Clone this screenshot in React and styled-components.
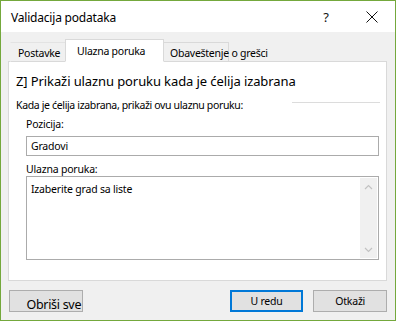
import React from 'react';
import styled, { createGlobalStyle } from 'styled-components';

const Global = createGlobalStyle`
  html, body { margin: 0; padding: 0; background: #ffffff; }
  * { box-sizing: border-box; }
  body { font-family: "Noto Sans", "Open Sans", sans-serif; color: #000; }
`;

const Window = styled.div`
  width: 396px;
  height: 321px;
  border: 1px solid #74a83c;
  display: flex;
  flex-direction: column;
  background: #f0f0f0;
  overflow: hidden;
`;

const TitleBar = styled.div`
  height: 31px;
  background: #ffffff;
  display: flex;
  align-items: center;
  padding-left: 10px;
  flex-shrink: 0;
`;

const Title = styled.div`
  flex: 1;
  font-size: 12px;
  letter-spacing: -0.2px;
  padding-top: 1px;
`;

const TitleButton = styled.div`
  width: 46px;
  height: 31px;
  display: flex;
  align-items: center;
  justify-content: center;
  font-size: 13px;
  color: #111;
`;

const Body = styled.div`
  flex: 1;
  display: flex;
  flex-direction: column;
  padding: 7px 8px 9px 7px;
`;

const TabRow = styled.div`
  display: flex;
  align-items: flex-end;
  height: 23px;
  padding-left: 2px;
  margin-bottom: -1px;
  position: relative;
  z-index: 1;
`;

const Tab = styled.div`
  height: ${p => (p.$active ? '23px' : '20px')};
  width: ${p => p.$w}px;
  border: 1px solid #d9d9d9;
  border-bottom: ${p => (p.$active ? '1px solid #ffffff' : '1px solid #d9d9d9')};
  ${p => (p.$plain ? 'border-color: transparent; border-top-color: #e3e3e3; border-bottom-color: #d9d9d9;' : '')}
  background: ${p => (p.$active ? '#ffffff' : '#f0f0f0')};
  font-size: 10.5px;
  letter-spacing: -0.25px;
  padding-left: ${p => p.$pad}px;
  display: flex;
  align-items: center;
  padding-top: ${p => (p.$active ? '0' : '1px')};
  white-space: nowrap;
  overflow: visible;
  margin-left: ${p => (p.$active ? '-1px' : '0')};
  margin-right: ${p => (p.$active ? '-1px' : '0')};
  position: relative;
  z-index: ${p => (p.$active ? 2 : 1)};
`;

const Panel = styled.div`
  width: 379px;
  height: 220px;
  background: #ffffff;
  border: 1px solid #d9d9d9;
  padding: 9px 6px 0 7px;
  display: flex;
  flex-direction: column;
`;

const CheckLine = styled.div`
  font-size: 13px;
  height: 20px;
  line-height: 20px;
  letter-spacing: -0.1px;
`;

const GroupHead = styled.div`
  display: flex;
  align-items: center;
  margin-top: 6px;
  height: 16px;
`;

const GroupText = styled.span`
  font-size: 10.5px;
  letter-spacing: -0.35px;
  white-space: nowrap;
`;

const GroupRule = styled.div`
  flex: 1;
  height: 1px;
  background: #dcdcdc;
  margin-left: 49px;
  margin-top: -5px;
`;

const Field = styled.div`
  display: flex;
  flex-direction: column;
  padding-left: 10px;
`;

const Label = styled.div`
  font-size: 10.5px;
  height: 14px;
  line-height: 14px;
  letter-spacing: -0.2px;
  margin-top: ${p => p.$top}px;
  margin-bottom: ${p => p.$bottom}px;
`;

const Input = styled.div`
  width: 353px;
  height: 20px;
  border: 1px solid #ababab;
  font-size: 10.5px;
  letter-spacing: -0.2px;
  padding-left: 4px;
  display: flex;
  align-items: center;
`;

const TextArea = styled.div`
  width: 353px;
  height: 84px;
  border: 1px solid #ababab;
  display: flex;
  padding: 1px 1px 1px 4px;
`;

const AreaText = styled.div`
  flex: 1;
  font-size: 10.5px;
  letter-spacing: -0.2px;
  padding-top: 4px;
`;

const ScrollBar = styled.div`
  width: 17px;
  background: #f0f0f0;
  display: flex;
  flex-direction: column;
  justify-content: space-between;
  align-items: center;
  padding: 6px 0 5px;
`;

const Footer = styled.div`
  display: flex;
  align-items: center;
  margin-top: 9px;
  padding-left: 1px;
`;

const Button = styled.div`
  width: ${p => p.$w}px;
  height: 22px;
  background: #e1e1e1;
  border: ${p => (p.$primary ? '2px solid #0078d7' : '1px solid #adadad')};
  font-size: 10.5px;
  letter-spacing: -0.2px;
  display: flex;
  justify-content: center;
  align-items: center;
  margin-left: ${p => p.$ml || 0}px;
  white-space: nowrap;
  overflow: hidden;
`;

const WideButtonText = styled.span`
  font-size: 12.5px;
  letter-spacing: -0.3px;
  margin-left: 16px;
  margin-top: 7px;
`;

const Chevron = ({ up }) => (
  <svg width="9" height="6" viewBox="0 0 9 6">
    <path
      d={up ? 'M1 5 L4.5 1.5 L8 5' : 'M1 1 L4.5 4.5 L8 1'}
      fill="none"
      stroke="#c2c2c2"
      strokeWidth="1.2"
    />
  </svg>
);

const CloseIcon = () => (
  <svg width="12" height="12" viewBox="0 0 12 12">
    <path d="M0.5 0.5 L11.5 11.5 M11.5 0.5 L0.5 11.5" stroke="#111" strokeWidth="1" />
  </svg>
);

export default function App() {
  return (
    <>
      <Global />
      <Window>
        <TitleBar>
          <Title>Validacija podataka</Title>
          <TitleButton>?</TitleButton>
          <TitleButton>
            <CloseIcon />
          </TitleButton>
        </TitleBar>
        <Body>
          <TabRow>
            <Tab $w={56} $pad={7} $plain>Postavke</Tab>
            <Tab $w={99} $pad={11} $active>Ulazna poruka</Tab>
            <Tab $w={66} $pad={6}>Obaveštenje o grešci</Tab>
          </TabRow>
          <Panel>
            <CheckLine>Z] Prikaži ulaznu poruku kada je ćelija izabrana</CheckLine>
            <GroupHead>
              <GroupText>Kada je ćelija izabrana, prikaži ovu ulaznu poruku:</GroupText>
              <GroupRule />
            </GroupHead>
            <Field>
              <Label $top={4} $bottom={5}>Pozicija:</Label>
              <Input>Gradovi</Input>
              <Label $top={6} $bottom={0}>Ulazna poruka:</Label>
              <TextArea>
                <AreaText>Izaberite grad sa liste</AreaText>
                <ScrollBar>
                  <Chevron up />
                  <Chevron />
                </ScrollBar>
              </TextArea>
            </Field>
          </Panel>
          <Footer>
            <Button $w={74}>
              <WideButtonText>Obriši sve</WideButtonText>
            </Button>
            <Button $w={74} $ml={147} $primary>U redu</Button>
            <Button $w={74} $ml={10}>Otkaži</Button>
          </Footer>
        </Body>
      </Window>
    </>
  );
}
